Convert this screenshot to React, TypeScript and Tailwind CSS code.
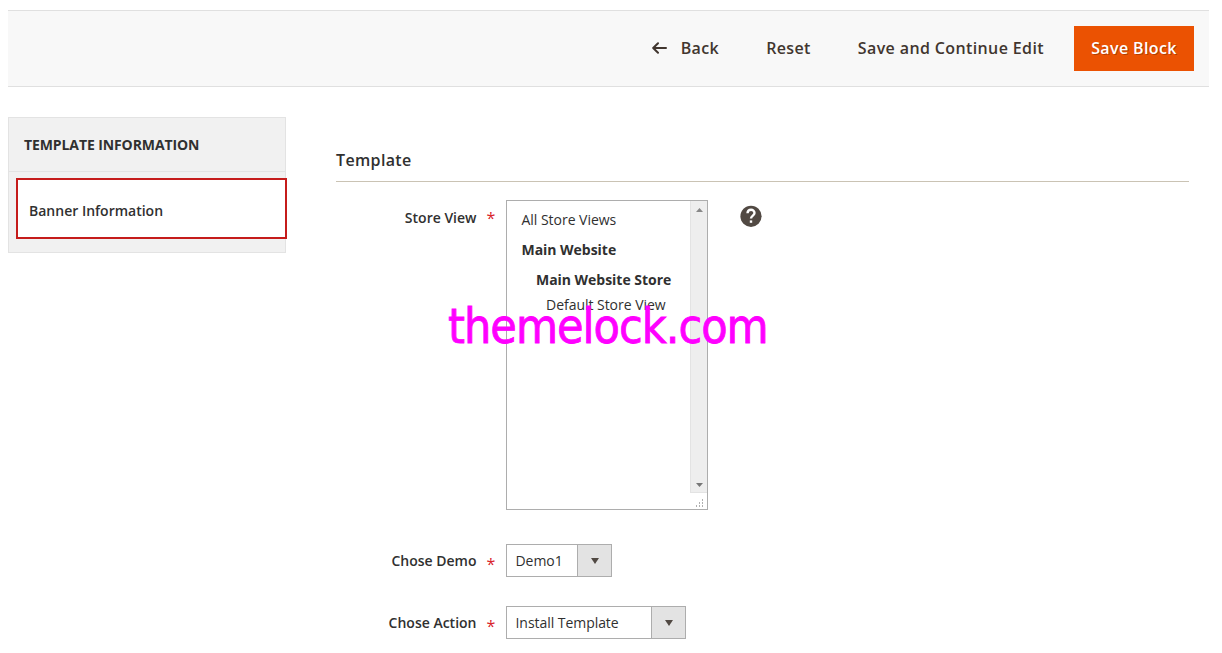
import React from 'react';

function Asterisk({ className }: { className: string }) {
  return <span className={`ml-[10px] w-[8px] text-[16px] leading-[20px] font-normal text-[#d8232b] ${className}`}>*</span>;
}

function Select({ value, className }: { value: string; className: string }) {
  return (
    <button type="button" className={`flex h-[33px] border border-[#adadad] bg-white text-left ${className}`}>
      <span className="flex-1 pl-[8.5px] leading-[31px] tracking-[-0.05px] whitespace-nowrap">{value}</span>
      <span className="flex h-full w-[34px] items-center justify-center border-l border-[#adadad] bg-[#e3e3e3]">
        <svg className="mt-px" width="8" height="6" viewBox="0 0 8 6"><path d="M0 0h8L4 6z" fill="#514943" /></svg>
      </span>
    </button>
  );
}

export default function App() {
  return (
    <div className="relative h-[653px] w-[1222px] overflow-hidden bg-white pt-[10px] pl-[8px] font-['Open_Sans',sans-serif] text-[14px] text-[#303030]">
      <header className="flex h-[77px] w-[1201px] items-center justify-end border-y border-[#e0e0e0] bg-[#f8f8f8] pr-[15px] text-[16px] font-semibold tracking-[0.38px] text-[#41362f]">
        <button type="button" className="flex items-center pb-[2px] whitespace-nowrap">
          <svg className="mt-[1px] mr-[14px]" width="15" height="12" viewBox="0 0 15 12" fill="none" stroke="#41362f" strokeWidth="2" strokeLinecap="round" strokeLinejoin="round"><path d="M14 6H1.5M6 1.2L1.2 6L6 10.8" /></svg>
          Back
        </button>
        <button type="button" className="ml-[47px] pb-[2px] whitespace-nowrap">Reset</button>
        <button type="button" className="ml-[47px] pb-[2px] whitespace-nowrap">Save and Continue Edit</button>
        <button type="button" className="ml-[30px] h-[45px] w-[120px] bg-[#eb5202] pb-[2px] whitespace-nowrap text-white [text-shadow:1px_1px_0_rgba(0,0,0,0.25)]">Save Block</button>
      </header>
      <div className="flex pt-[30px]">
        <aside className="h-[136px] w-[278px] border border-[#e3e3e3] bg-[#f1f1f1]">
          <h2 className="h-[54px] border-b border-[#e3e3e3] pl-[15px] leading-[54px] font-bold tracking-[-0.1px] whitespace-nowrap">TEMPLATE INFORMATION</h2>
          <a className="mt-[6px] ml-[7px] block h-[61px] w-[271px] border-2 border-[#c51c1b] bg-white pl-[11px] leading-[61px] font-semibold whitespace-nowrap">Banner Information</a>
        </aside>
        <main className="ml-[50px] w-[853px]">
          <h1 className="h-[65px] border-b border-[#cac3b4] pt-[31px] text-[16px] leading-[24px] font-semibold tracking-[0.35px]">Template</h1>
          <div className="flex pt-[18px]">
            <div className="flex w-[170px] justify-end pt-[8px] pr-[11.5px] leading-[20px] font-semibold whitespace-nowrap">
              <span>Store View</span><Asterisk className="" />
            </div>
            <div className="flex h-[310px] w-[202px] border border-[#adadad]">
              <div className="flex-1 pt-[9px] pl-[14.5px] leading-[20px] tracking-[-0.03px] whitespace-nowrap">
                <div className="h-[30px]">All Store Views</div>
                <div className="h-[30px] font-bold">Main Website</div>
                <div className="h-[25px] pl-[14.5px] font-bold">Main Website Store</div>
                <div className="pl-[24.5px]">Default Store View</div>
              </div>
              <div className="flex w-[17px] flex-col">
                <div className="flex h-[292px] flex-col items-center justify-between border-b border-l border-[#e3e3e3] bg-[#eeeeee] pt-[7px] pb-[5px]">
                  <svg width="7" height="4" viewBox="0 0 7 4"><path d="M0 4h7L3.5 0z" fill="#888" /></svg>
                  <svg width="7" height="4" viewBox="0 0 7 4"><path d="M0 0h7L3.5 4z" fill="#777" /></svg>
                </div>
                <svg className="mt-[6px] ml-[6px]" width="9" height="9" viewBox="0 0 9 9" fill="#b0b0b0"><path d="M6 0h1v2H6zM3 3h1v2H3zM6 3h1v2H6zM0 6h1v2H0zM3 6h1v2H3zM6 6h1v2H6z" /></svg>
              </div>
            </div>
            <svg className="mt-[5px] ml-[32px]" width="22" height="22" viewBox="0 0 22 22"><circle cx="11" cy="11.3" r="10.6" fill="#514943" /><path d="M7.5 8.3C7.7 3.5 14.5 3.7 14.5 8C14.5 10.6 11 10.7 11 13.6" fill="none" stroke="#fff" strokeWidth="2.4" /><path d="M9.8 15.4h2.4v2.4H9.8z" fill="#fff" /></svg>
          </div>
          <div className="flex pt-[34px]">
            <div className="flex w-[170px] justify-end pt-[7px] pr-[11.5px] leading-[20px] font-semibold whitespace-nowrap">
              <span>Chose Demo</span><Asterisk className="pt-[3px]" />
            </div>
            <Select value="Demo1" className="w-[106px]" />
          </div>
          <div className="flex pt-[29px]">
            <div className="flex w-[170px] justify-end pt-[7px] pr-[11.5px] leading-[20px] font-semibold whitespace-nowrap">
              <span>Chose Action</span><Asterisk className="pt-[3px]" />
            </div>
            <Select value="Install Template" className="w-[180px]" />
          </div>
        </main>
      </div>
      <div className="pointer-events-none absolute top-[298px] left-[448px] font-['DejaVu_Sans_Condensed','DejaVu_Sans',sans-serif] text-[48px] leading-[56px] tracking-[-1px] whitespace-nowrap text-[#ff00ff] [font-stretch:semi-condensed] [-webkit-text-stroke:0.8px_#ff00ff]">themelock.com</div>
    </div>
  );
}
